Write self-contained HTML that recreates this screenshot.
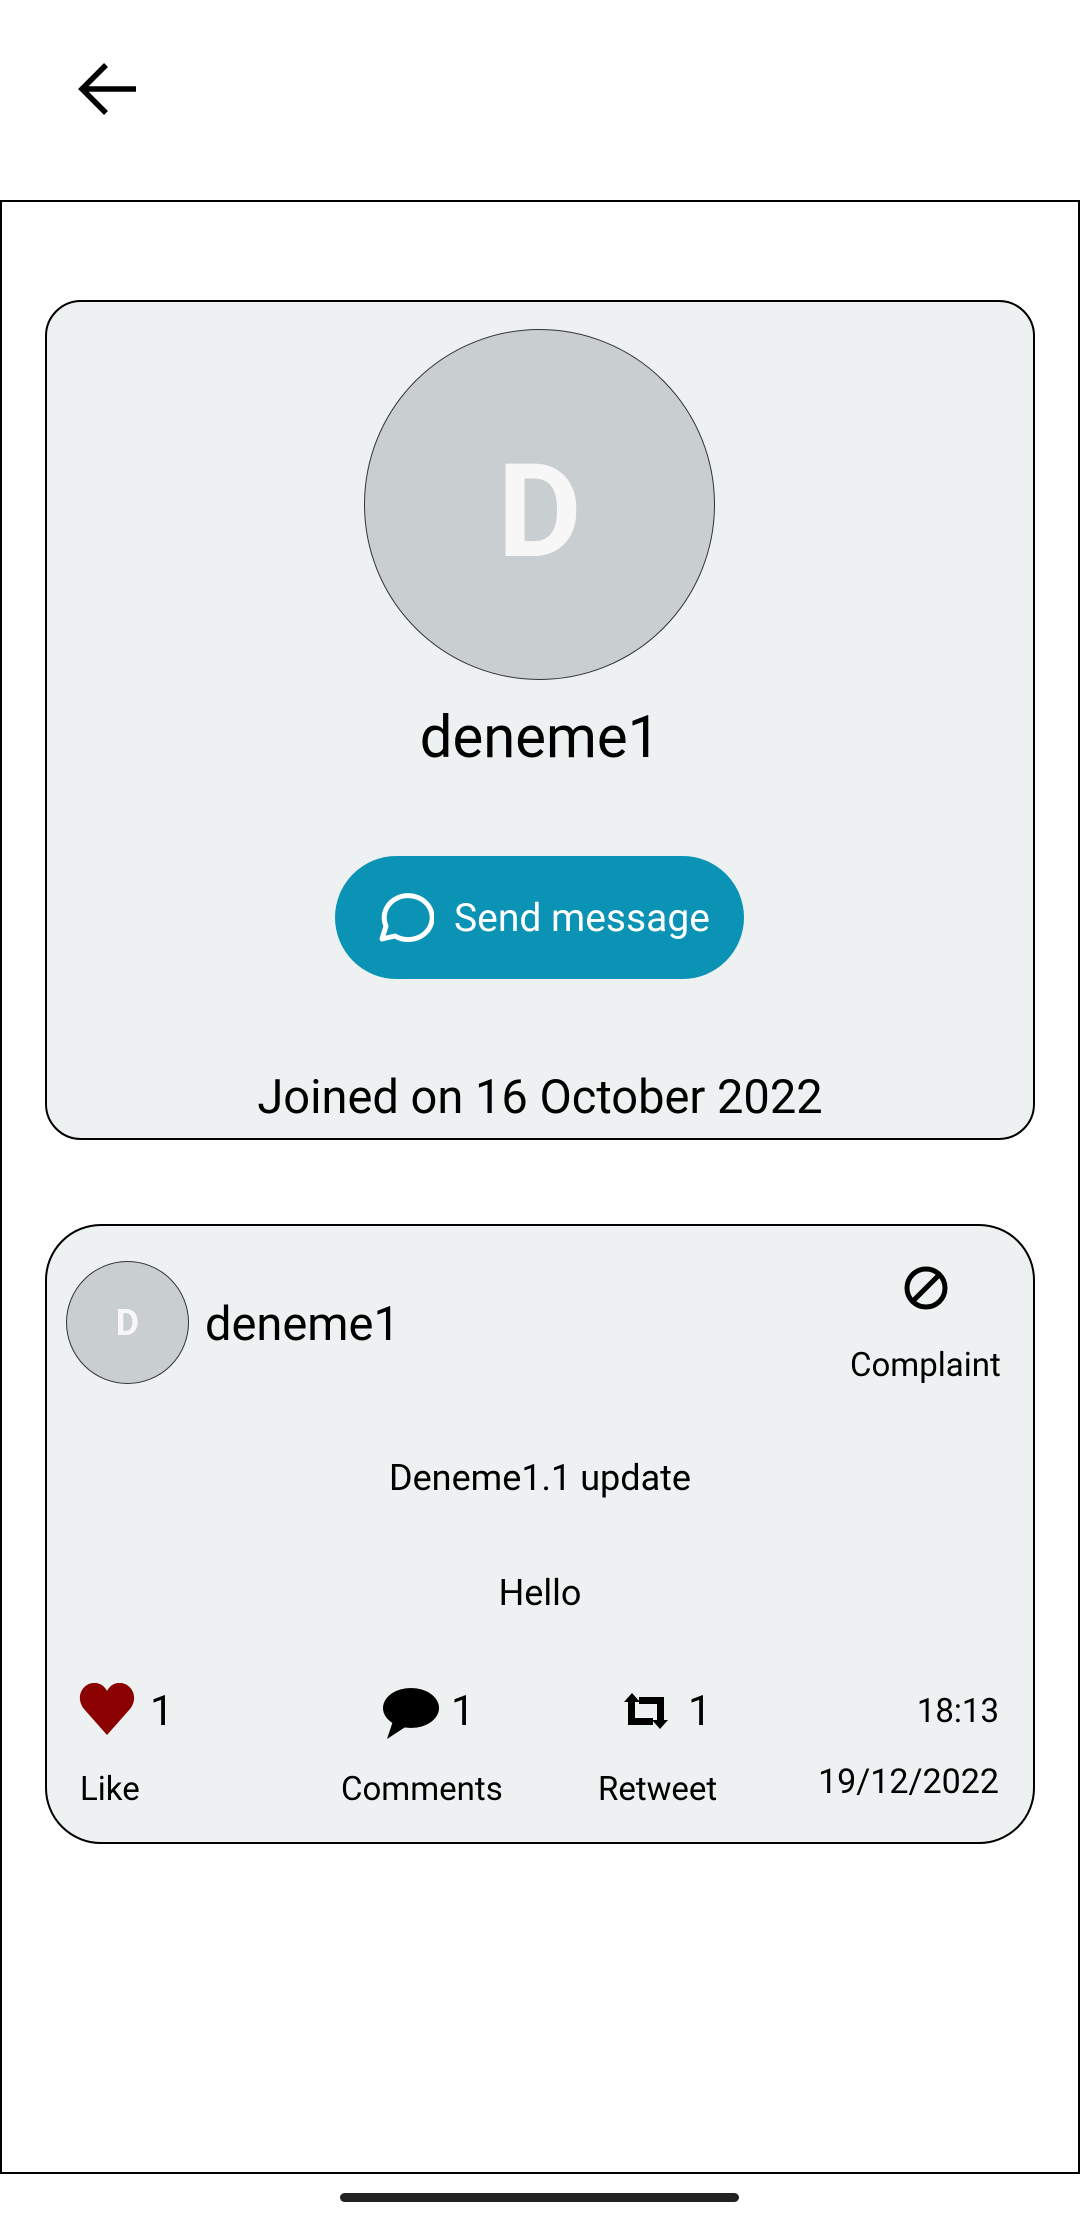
<!DOCTYPE html>
<html><head><style>
*{margin:0;padding:0;box-sizing:border-box}
body{width:1080px;height:2220px;background:#fff;position:relative;font-family:"Roboto","Liberation Sans",sans-serif;color:#000;overflow:hidden}
.a{position:absolute}
.t{position:absolute;white-space:nowrap;line-height:1}
</style></head><body>
<svg class="a" style="left:74px;top:58px" width="66" height="62" viewBox="0 0 66 62"><path d="M62 31H8M32 7L8 31l24 24" fill="none" stroke="#000" stroke-width="5.5"/></svg>
<div class="a" style="left:0;top:200px;width:1080px;height:1974px;border:2px solid #000;background:#fefefe"></div>
<div class="a" style="left:45px;top:300px;width:990px;height:840px;border:2.5px solid #000;border-radius:36px;background:#eef1f2"></div>
<div class="a" style="left:364px;top:329px;width:351px;height:351px;border:1.5px solid #333;border-radius:50%;background:#c9ced1"></div>
<div class="t" style="left:364px;width:351px;top:447px;text-align:center;font-size:130px;font-weight:bold;color:#f7f7f7">D</div>
<div class="t" style="left:0;width:1080px;top:709px;text-align:center;font-size:58px">deneme1</div>
<div class="a" style="left:335px;top:856px;width:409px;height:123px;border-radius:62px;background:#0a93b5"></div>
<svg class="a" style="left:372px;top:885px" width="62" height="62" viewBox="0 0 62 62"><path d="M10 54l4-13a24 22 0 1 1 9 10z" fill="none" stroke="#fff" stroke-width="5" stroke-linejoin="round"/></svg>
<div class="t" style="left:454px;top:899px;font-size:39px;color:#fff">Send message</div>
<div class="t" style="left:0;width:1080px;top:1074px;text-align:center;font-size:47px">Joined on 16 October 2022</div>
<div class="a" style="left:45px;top:1224px;width:990px;height:620px;border:2.5px solid #000;border-radius:56px;background:#eef1f2"></div>
<div class="a" style="left:66px;top:1261px;width:123px;height:123px;border:1.5px solid #333;border-radius:50%;background:#c9ced1"></div>
<div class="t" style="left:66px;width:123px;top:1305px;text-align:center;font-size:36px;font-weight:bold;color:#f7f7f7">D</div>
<div class="t" style="left:205px;top:1301px;font-size:47px">deneme1</div>
<svg class="a" style="left:902px;top:1264px" width="48" height="48" viewBox="0 0 48 48"><circle cx="24" cy="24" r="19" fill="none" stroke="#000" stroke-width="5"/><path d="M11 37L37 11" stroke="#000" stroke-width="5"/></svg>
<div class="t" style="left:850px;top:1349px;font-size:33px">Complaint</div>
<div class="t" style="left:0;width:1080px;top:1460px;text-align:center;font-size:36px">Deneme1.1 update</div>
<div class="t" style="left:0;width:1080px;top:1575px;text-align:center;font-size:36px">Hello</div>
<svg class="a" style="left:78px;top:1682px" width="58" height="54" viewBox="0 0 58 54"><path d="M29 53L6 27C-4 14 6 0 17 1c6 0 10 4 12 8 2-4 6-8 12-8 11-1 21 13 11 26z" fill="#8b0000"/></svg>
<div class="t" style="left:150px;top:1691px;font-size:42px">1</div>
<svg class="a" style="left:380px;top:1686px" width="60" height="54" viewBox="0 0 60 54"><ellipse cx="31" cy="22" rx="28" ry="20" fill="#000"/><path d="M14 32L7 53 30 38z" fill="#000"/></svg>
<div class="t" style="left:451px;top:1691px;font-size:42px">1</div>
<svg class="a" style="left:620px;top:1690px" width="52" height="42" viewBox="0 0 52 42"><path d="M4 12l8-9 8 9h-5v16h18v7H8V12z M48 30l-8 9-8-9h5V14H19V7h25v23z" fill="#000"/></svg>
<div class="t" style="left:688px;top:1691px;font-size:42px">1</div>
<div class="t" style="right:81px;top:1695px;font-size:33px">18:13</div>
<div class="t" style="left:80px;top:1773px;font-size:33px">Like</div>
<div class="t" style="left:341px;top:1773px;font-size:33px">Comments</div>
<div class="t" style="left:598px;top:1773px;font-size:33px">Retweet</div>
<div class="t" style="right:81px;top:1765px;font-size:34px">19/12/2022</div>
<div class="a" style="left:340px;top:2193px;width:399px;height:9px;border-radius:5px;background:#222"></div>
</body></html>
